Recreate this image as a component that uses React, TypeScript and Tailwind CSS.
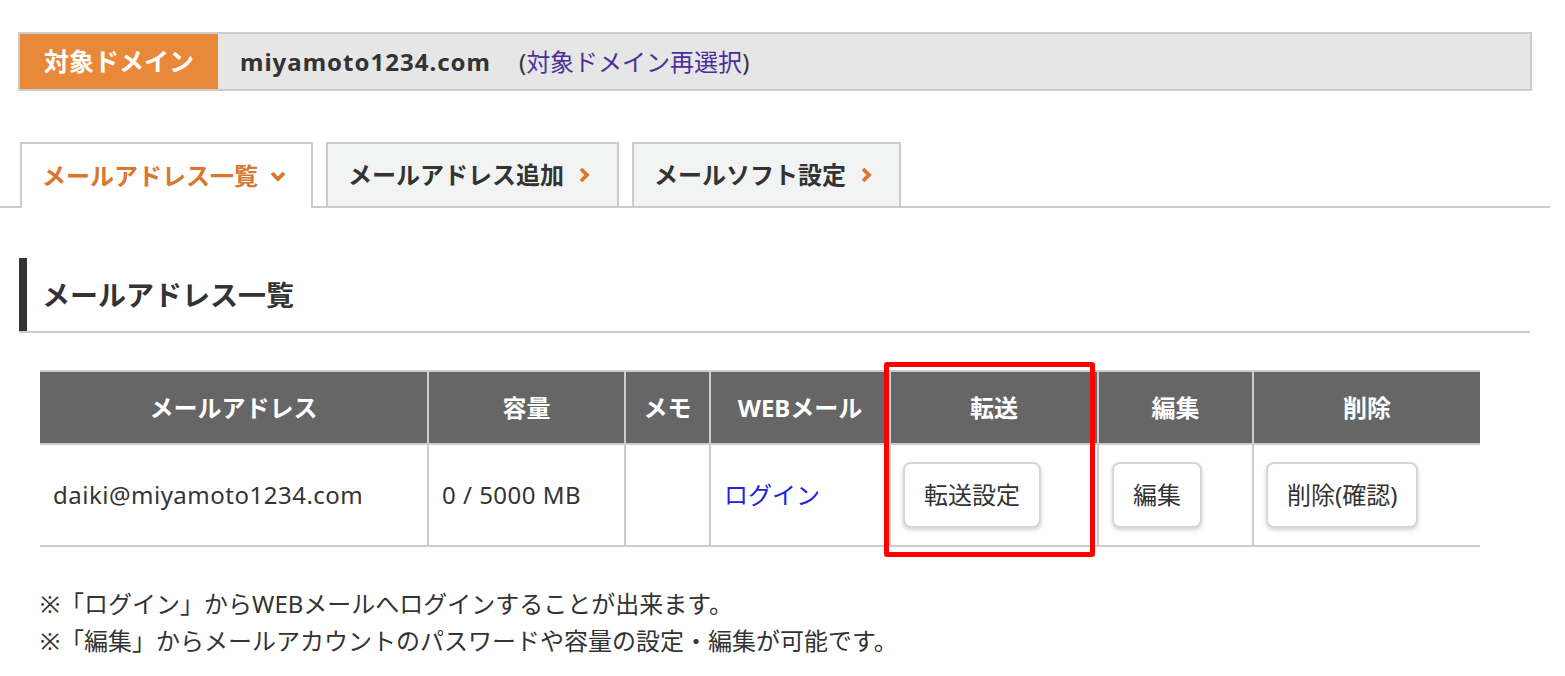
import React from "react";

const font = "font-['Noto_Sans','Noto_Sans_CJK_JP',sans-serif]";

function ChevronDown() {
  return (
    <svg width="16" height="12" viewBox="0 0 16 12" className="ml-[12px]">
      <path d="M2 3 L8 9 L14 3" fill="none" stroke="#d9772e" strokeWidth="3.8" strokeLinejoin="miter" />
    </svg>
  );
}

function ChevronRight() {
  return (
    <svg width="12" height="16" viewBox="0 0 12 16" className="ml-[14px]">
      <path d="M3 2 L9 8 L3 14" fill="none" stroke="#d9772e" strokeWidth="3.8" strokeLinejoin="miter" />
    </svg>
  );
}

function Tab({ label, active, width, right }: { label: string; active?: boolean; width: string; right?: boolean }) {
  return (
    <div
      className={`${width} flex items-center pl-[20px] border-2 border-b-0 border-[#ccc] text-[24px] font-bold ${
        active ? "h-[66px] -mb-[2px] bg-white text-[#d9772e]" : "h-[64px] bg-[#f2f4f3] text-[#333]"
      }`}
    >
      <span>{label}</span>
      {right ? <ChevronRight /> : <ChevronDown />}
    </div>
  );
}

function Btn({ children }: { children: React.ReactNode }) {
  return (
    <button className="h-[66px] px-[19px] rounded-[8px] border-2 border-[#d6d6d6] bg-white text-[24px] text-[#333] shadow-[0_2px_4px_rgba(0,0,0,0.18)]">
      {children}
    </button>
  );
}

export default function App() {
  return (
    <div className={`${font} w-[1565px] h-[676px] bg-white text-[#333] pt-[32px] overflow-hidden`}>
      {/* Domain bar */}
      <div className="ml-[18px] w-[1514px] h-[59px] border-2 border-[#ccc] bg-[#e6e6e6] flex items-center">
        <div className="w-[198px] h-full bg-[#e8893a] text-white text-[25px] font-bold flex items-center justify-center">
          対象ドメイン
        </div>
        <span className="ml-[22px] text-[24px] font-bold tracking-[1px] text-[#333]">miyamoto1234.com</span>
        <span className="ml-[28px] text-[24px] text-[#333]">
          (<span className="text-[#4d2d9c]">対象ドメイン再選択</span>)
        </span>
      </div>

      {/* Tabs */}
      <div className="mt-[51px] w-[1550px] border-b-2 border-[#ccc] flex items-end gap-[13px] pl-[20px]">
        <Tab label="メールアドレス一覧" active width="w-[293px]" />
        <Tab label="メールアドレス追加" width="w-[293px]" right />
        <Tab label="メールソフト設定" width="w-[269px]" right />
      </div>

      {/* Heading */}
      <div className="mt-[50px] ml-[19px] w-[1511px] border-b-2 border-[#ccc]">
        <div className="h-[73px] border-l-8 border-[#333] pl-[15px] flex items-center">
          <h2 className="text-[28px] font-bold text-[#333]">メールアドレス一覧</h2>
        </div>
      </div>

      {/* Table */}
      <div className="relative mt-[37px] ml-[40px] w-[1440px]">
        <table className="w-full border-collapse table-fixed text-[24px]">
          <colgroup>
            <col className="w-[388px]" />
            <col className="w-[197px]" />
            <col className="w-[85px]" />
            <col className="w-[180px]" />
            <col className="w-[208px]" />
            <col className="w-[155px]" />
            <col className="w-[227px]" />
          </colgroup>
          <thead>
            <tr className="h-[73px] bg-[#666] text-white border-t-2 border-[#ccc]">
              {["メールアドレス", "容量", "メモ", "WEBメール", "転送", "編集", "削除"].map((h, i) => (
                <th
                  key={h}
                  className={`font-bold text-center border-[#ccc] ${i > 0 ? "border-l-2" : ""}`}
                >
                  {h}
                </th>
              ))}
            </tr>
          </thead>
          <tbody>
            <tr className="h-[102px] border-t-2 border-b-2 border-[#ccc]">
              <td className="pl-[13px] tracking-[0.5px]">daiki@miyamoto1234.com</td>
              <td className="pl-[13px] border-l-2 border-[#ccc] tracking-[0.5px]">0 / 5000 MB</td>
              <td className="border-l-2 border-[#ccc]"></td>
              <td className="pl-[13px] border-l-2 border-[#ccc] text-[#2222dd]">ログイン</td>
              <td className="pl-[12px] border-l-2 border-[#ccc]">
                <Btn>転送設定</Btn>
              </td>
              <td className="pl-[13px] border-l-2 border-[#ccc]">
                <Btn>編集</Btn>
              </td>
              <td className="pl-[12px] border-l-2 border-[#ccc]">
                <Btn>削除(確認)</Btn>
              </td>
            </tr>
          </tbody>
        </table>
        {/* highlight */}
        <div className="absolute left-[844px] top-[-8px] w-[211px] h-[195px] border-[5px] border-[#ff0000] rounded-[3px] pointer-events-none" />
      </div>

      {/* Notes */}
      <div className="mt-[38px] ml-[40px] text-[24px] leading-[37px] text-[#333]">
        <p>※「ログイン」からWEBメールへログインすることが出来ます。</p>
        <p>※「編集」からメールアカウントのパスワードや容量の設定・編集が可能です。</p>
      </div>
    </div>
  );
}
